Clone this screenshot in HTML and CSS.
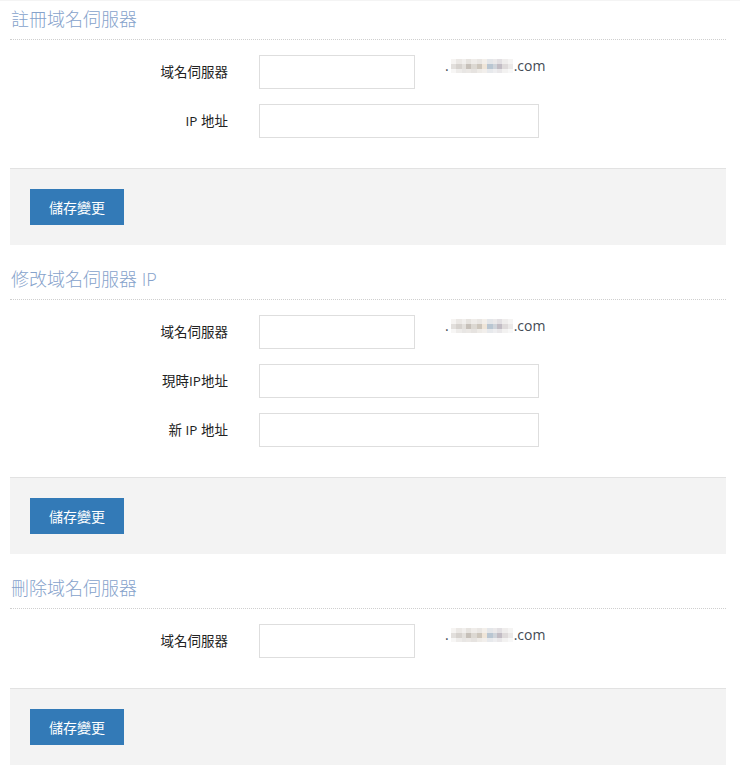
FILE: index.html
```html
<!DOCTYPE html>
<html lang="zh-Hant">
<head>
<meta charset="utf-8">
<title>域名伺服器</title>
<link rel="stylesheet" href="styles.css">
</head>
<body>
<div class="page">
  <section class="panel first">
    <h3 class="title">註冊域名伺服器</h3>
    <div class="rows">
      <div class="row">
        <label class="label">域名伺服器</label>
        <div class="field"><input class="input short" type="text"><span class="domain">.<span class="blur"></span>.com</span></div>
      </div>
      <div class="row">
        <label class="label">IP 地址</label>
        <div class="field"><input class="input long" type="text"></div>
      </div>
    </div>
    <div class="actions"><button class="btn" type="button">儲存變更</button></div>
  </section>

  <section class="panel">
    <h3 class="title">修改域名伺服器 IP</h3>
    <div class="rows">
      <div class="row">
        <label class="label">域名伺服器</label>
        <div class="field"><input class="input short" type="text"><span class="domain">.<span class="blur"></span>.com</span></div>
      </div>
      <div class="row">
        <label class="label">現時IP地址</label>
        <div class="field"><input class="input long" type="text"></div>
      </div>
      <div class="row">
        <label class="label">新 IP 地址</label>
        <div class="field"><input class="input long" type="text"></div>
      </div>
    </div>
    <div class="actions"><button class="btn" type="button">儲存變更</button></div>
  </section>

  <section class="panel">
    <h3 class="title">刪除域名伺服器</h3>
    <div class="rows">
      <div class="row">
        <label class="label">域名伺服器</label>
        <div class="field"><input class="input short" type="text"><span class="domain">.<span class="blur"></span>.com</span></div>
      </div>
    </div>
    <div class="actions"><button class="btn" type="button">儲存變更</button></div>
  </section>
</div>
</body>
</html>
```

FILE: styles.css
```css
html, body {
  margin: 0;
  padding: 0;
  background: #ffffff;
}
body {
  font-family: "Open Sans", "Noto Sans CJK TC", sans-serif;
  color: #333333;
  font-size: 14px;
}
.page {
  padding: 0 14px 0 10px;
  border-top: 1px solid #f4f4f4;
}
.panel {
  margin: 0;
}
.title {
  margin: 24px 0 0;
  padding: 0 0 10px 1px;
  font-size: 18px;
  line-height: 20px;
  font-weight: 300;
  color: #86a2cb;
  border-bottom: 1px dotted #cfcfcf;
  font-family: "Open Sans", "Noto Sans CJK TC", sans-serif;
}
.panel.first .title {
  margin-top: 8px;
}
.rows {
  display: flex;
  flex-direction: column;
  gap: 15px;
  padding: 15px 0 30px;
}
.row {
  display: grid;
  grid-template-columns: 218px 1fr;
  column-gap: 31px;
  align-items: center;
}
.label {
  text-align: right;
  font-size: 13.5px;
  font-weight: 400;
  color: #222;
  line-height: 20px;
}
.field {
  display: flex;
  align-items: flex-start;
}
.input {
  box-sizing: border-box;
  height: 34px;
  border: 1px solid #dedede;
  background: #fff;
  margin: 0;
  padding: 6px 10px;
  font: inherit;
}
.input.short { width: 156px; }
.input.long { width: 280px; }
.domain {
  margin-left: 30px;
  margin-top: 1px;
  line-height: 20px;
  font-size: 14px;
  color: #444b55;
  display: inline-flex;
  align-items: center;
}
.blur {
  display: inline-block;
  width: 62px;
  height: 14px;
  margin: 0 1px 0 2px;
  background:
    linear-gradient(90deg, #f6f4f2 0 8%, #ebe8e5 8% 17%, #f1efed 17% 25%, #e6e3df 25% 33%, #efece9 33% 42%, #e9e6e3 42% 50%, #f3efea 50% 58%, #e4e6e9 58% 67%, #ebe9ea 67% 75%, #e2dfe2 75% 83%, #efedec 83% 92%, #f5f4f3 92% 100%) 0 0 / 100% 5px no-repeat,
    linear-gradient(90deg, #e2dfdc 0 8%, #d6d2ce 8% 17%, #e3e0dc 17% 25%, #c6c0b9 25% 33%, #dcd8d2 33% 42%, #cdc6bc 42% 50%, #efe5d8 50% 58%, #b9c6d2 58% 67%, #cfd4da 67% 75%, #c2bcc4 75% 83%, #dedada 83% 92%, #ebe9e8 92% 100%) 0 5px / 100% 5px no-repeat,
    linear-gradient(90deg, #f7f6f5 0 8%, #eeecea 8% 17%, #e8e6e4 17% 25%, #ebe8e5 25% 33%, #e6e3e0 33% 42%, #eeebe7 42% 50%, #f2efec 50% 58%, #e7e9ec 58% 67%, #eeeef0 67% 75%, #e9e7e9 75% 83%, #f3f2f1 83% 92%, #f8f8f8 92% 100%) 0 10px / 100% 4px no-repeat;
}
.actions {
  background: #f3f3f3;
  border-top: 1px solid #e2e2e2;
  padding: 20px;
}
.btn {
  display: block;
  box-sizing: border-box;
  width: 94px;
  height: 36px;
  padding: 0;
  border: none;
  background: #337ab7;
  color: #ffffff;
  font-family: "Open Sans", "Noto Sans CJK TC", sans-serif;
  font-size: 14px;
  cursor: pointer;
}
```
